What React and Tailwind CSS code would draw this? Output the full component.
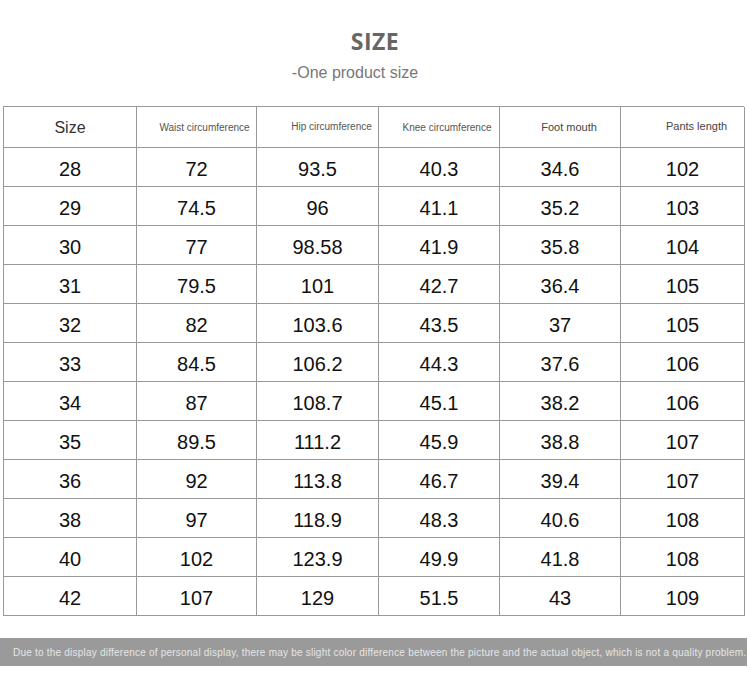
const headers = [
  { label: 'Size', cls: 'text-[16px] text-[#333] pl-0 pt-[2px]' },
  { label: 'Waist circumference', cls: 'text-[10px] text-[#555] pl-[16px]' },
  { label: 'Hip circumference', cls: 'text-[10px] text-[#555] pl-[28px] pb-[2px]' },
  { label: 'Knee circumference', cls: 'text-[10px] text-[#555] pl-[16px]' },
  { label: 'Foot mouth', cls: 'text-[11px] text-[#444] pl-[18px] pt-[1px]' },
  { label: 'Pants length', cls: 'text-[11px] text-[#444] pl-[28px] pb-[1px]' },
];

const rows = [
  ['28', '72', '93.5', '40.3', '34.6', '102'],
  ['29', '74.5', '96', '41.1', '35.2', '103'],
  ['30', '77', '98.58', '41.9', '35.8', '104'],
  ['31', '79.5', '101', '42.7', '36.4', '105'],
  ['32', '82', '103.6', '43.5', '37', '105'],
  ['33', '84.5', '106.2', '44.3', '37.6', '106'],
  ['34', '87', '108.7', '45.1', '38.2', '106'],
  ['35', '89.5', '111.2', '45.9', '38.8', '107'],
  ['36', '92', '113.8', '46.7', '39.4', '107'],
  ['38', '97', '118.9', '48.3', '40.6', '108'],
  ['40', '102', '123.9', '49.9', '41.8', '108'],
  ['42', '107', '129', '51.5', '43', '109'],
];

const grid = 'grid grid-cols-[133px_120px_122px_121px_121px_124px]';

export default function App() {
  return (
    <div className="w-[750px] h-[678px] bg-white overflow-hidden font-['Liberation_Sans',Arial,sans-serif]">
      {/* Title */}
      <div className="flex flex-col items-center pt-[27px]">
        <h1 className="font-['Open_Sans',sans-serif] font-bold text-[23px] leading-[28px] text-[#666] tracking-[0.5px]">SIZE</h1>
        <p className="mt-[8px] text-[16px] leading-[20px] text-[#777] pr-[40px]">-One product size</p>
      </div>

      {/* Table */}
      <div className="ml-[3px] mt-[23px] w-[741px] border-t border-l border-[#999]">
        <div className={`${grid} h-[41px]`}>
          {headers.map((h) => (
            <div key={h.label} className={`flex items-center justify-center border-r border-b border-[#999] ${h.cls}`}>
              {h.label}
            </div>
          ))}
        </div>
        {rows.map((r) => (
          <div key={r[0]} className={`${grid} h-[39px]`}>
            {r.map((v, i) => (
              <div key={i} className="flex items-center justify-center border-r border-b border-[#999] text-[20px] text-[#111] pt-[3px]">
                {v}
              </div>
            ))}
          </div>
        ))}
      </div>

      {/* Notice bar */}
      <div className="mt-[22px] w-[747px] h-[28px] bg-[#9a9a9a] flex items-center pl-[13px]">
        <p className="text-[10px] text-[#e6e6e6] tracking-[0.22px] whitespace-nowrap">
          Due to the display difference of personal display, there may be slight color difference between the picture and the actual object, which is not a quality problem.
        </p>
      </div>
    </div>
  );
}
